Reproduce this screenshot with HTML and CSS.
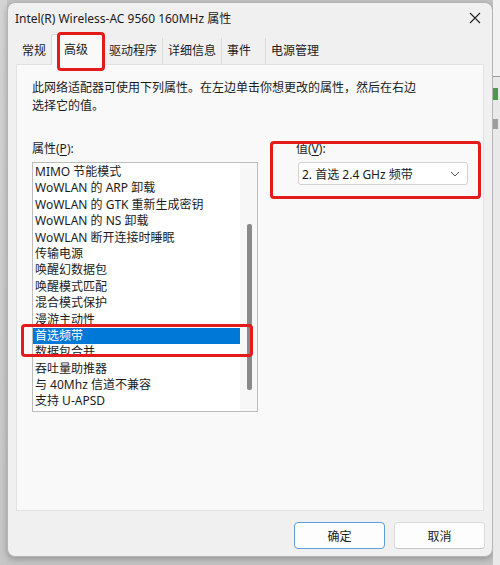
FILE: index.html
```html
<!DOCTYPE html>
<html lang="zh-CN">
<head>
<meta charset="utf-8">
<title>属性</title>
<link rel="stylesheet" href="styles.css">
</head>
<body>
<div class="screen">
  <div class="edge-left"></div>
  <div class="window-col">
    <div class="window">
      <div class="titlebar">
        <span class="title">Intel(R) Wireless-AC 9560 160MHz 属性</span>
        <svg class="close" width="12" height="12" viewBox="0 0 12 12"><path d="M1 1 L11 11 M11 1 L1 11" stroke="#222" stroke-width="1.1" fill="none"/></svg>
      </div>
      <div class="tabs">
        <div class="tab first">常规</div>
        <div class="tab active">高级</div>
        <div class="tab">驱动程序</div>
        <div class="tab">详细信息</div>
        <div class="tab wide-end">事件</div>
        <div class="tab">电源管理</div>
      </div>
      <div class="panel">
        <p class="desc">此网络适配器可使用下列属性。在左边单击你想更改的属性，然后在右边<br>选择它的值。</p>
        <div class="columns">
          <div class="col-left">
            <div class="label">属性(<u>P</u>):</div>
            <div class="listbox">
              <ul class="items">
                <li>MIMO 节能模式</li>
                <li>WoWLAN 的 ARP 卸载</li>
                <li>WoWLAN 的 GTK 重新生成密钥</li>
                <li>WoWLAN 的 NS 卸载</li>
                <li>WoWLAN 断开连接时睡眠</li>
                <li>传输电源</li>
                <li>唤醒幻数据包</li>
                <li>唤醒模式匹配</li>
                <li>混合模式保护</li>
                <li>漫游主动性</li>
                <li class="selected">首选频带</li>
                <li>数据包合并</li>
                <li>吞吐量助推器</li>
                <li>与 40Mhz 信道不兼容</li>
                <li>支持 U-APSD</li>
              </ul>
              <div class="scrolltrack"><div class="thumb"></div></div>
            </div>
          </div>
          <div class="col-right">
            <div class="label">值(<u>V</u>):</div>
            <div class="select">
              <span>2. 首选 2.4 GHz 频带</span>
              <svg width="10" height="6" viewBox="0 0 10 6"><path d="M1 1 L5 5 L9 1" stroke="#555" stroke-width="1" fill="none"/></svg>
            </div>
          </div>
        </div>
      </div>
      <div class="footer">
        <button class="btn default">确定</button>
        <button class="btn">取消</button>
      </div>
    </div>
  </div>
  <div class="edge-right">
    <div class="er-top"></div>
    <div class="er-line"></div>
    <div class="er-green"></div>
    <div class="er-blob"></div>
  </div>
  <div class="mark mark-tab"></div>
  <div class="mark mark-value"></div>
  <div class="mark mark-item"></div>
</div>
</body>
</html>
```

FILE: styles.css
```css
* { box-sizing: border-box; }
html, body { margin: 0; padding: 0; }
body {
  width: 500px;
  height: 565px;
  overflow: hidden;
  background: #c4c4c4;
  font-family: "Noto Sans", "Noto Sans CJK SC", sans-serif;
  font-size: 12px;
  color: #1b1b1b;
}
.screen {
  position: relative;
  display: flex;
  width: 500px;
  height: 565px;
}
.edge-left {
  width: 7px;
  background: linear-gradient(#d4d4d4, #c6c6c6);
}
.window-col {
  width: 486px;
  padding-top: 2px;
}
.window {
  height: 555px;
  border: 1px solid #b4b4b4;
  border-radius: 8px;
  background: #f0f0f0;
  box-shadow: 0 2px 6px rgba(0,0,0,0.25);
  display: flex;
  flex-direction: column;
}
.titlebar {
  height: 29px;
  display: flex;
  align-items: center;
  justify-content: space-between;
  padding: 0 11px 0 7px;
}
.title { font-size: 12px; }
.close { display: block; }
.tabs {
  height: 32px;
  display: flex;
  align-items: flex-end;
  padding-left: 8px;
  position: relative;
  z-index: 1;
}
.tab {
  height: 26px;
  line-height: 26px;
  padding: 0 5px;
  border-left: 1px solid #dcdcdc;
  white-space: nowrap;
}
.tab.first { border-left: none; padding-left: 6px; }
.tab.wide-end { padding-right: 14px; }
.tab.active {
  height: 31px;
  line-height: 30px;
  padding: 0 15px 0 12px;
  background: #f9f9f9;
  border: 1px solid #dadada;
  border-bottom: none;
  border-radius: 3px 3px 0 0;
  margin-bottom: -1px;
}
.tab.active + .tab { border-left: none; }
.panel {
  height: 447px;
  margin: 0 8px 0 8px;
  background: #f9f9f9;
  border: 1px solid #e2e2e2;
  padding: 14px 15px 0 15px;
}
.desc {
  margin: 0;
  line-height: 18px;
}
.columns {
  display: flex;
  margin-top: 25px;
}
.label {
  line-height: 18px;
  height: 18px;
}
.label u { text-underline-offset: 2px; }
.col-left { width: 227px; }
.col-right {
  margin-left: 38px;
}
.listbox {
  margin-top: 4px;
  height: 250px;
  background: #fff;
  border: 1px solid #bdbdbd;
  display: flex;
}
.items {
  list-style: none;
  margin: 0;
  padding: 1px 0 0 0;
  width: 207px;
}
.items li {
  height: 16.4px;
  line-height: 16.4px;
  padding-left: 2px;
  white-space: nowrap;
}
.items li.selected {
  background: #0078d7;
  color: #fff;
}
.scrolltrack {
  flex: 1;
  background: #f7f7f7;
  padding: 61px 0 0 7px;
}
.thumb {
  width: 5px;
  height: 166px;
  background: #8a8a8a;
  border-radius: 2px;
}
.select {
  margin: 4px 0 0 2px;
  width: 170px;
  height: 23px;
  background: #fff;
  border: 1px solid #d3d3d3;
  border-radius: 3px;
  display: flex;
  align-items: center;
  justify-content: space-between;
  padding: 0 7px 0 3px;
  white-space: nowrap;
}
.select svg { display: block; }
.footer {
  display: flex;
  justify-content: flex-end;
  gap: 9px;
  padding: 11px 7px 0 0;
}
.btn {
  width: 91px;
  height: 27px;
  font-family: inherit;
  font-size: 12px;
  color: #1b1b1b;
  background: #fdfdfd;
  border: 1px solid #dcdcdc;
  border-bottom-color: #c8c8c8;
  border-radius: 4px;
  padding: 0;
}
.btn.default {
  border: 1.5px solid #5c9fd8;
}
.edge-right {
  width: 7px;
  background: #e9e9e9;
  display: flex;
  flex-direction: column;
  overflow: hidden;
}
.er-top { height: 76px; background: #f2f2f2; }
.er-line { height: 1px; background: #9a9a9a; }
.er-green { margin-top: 11px; height: 12px; width: 5px; background: #4a9a4a; }
.er-blob { margin-top: 19px; height: 10px; width: 5px; background: #6a6a6a; opacity: 0.6; }
.mark {
  position: absolute;
  border: 3px solid #e31b1b;
  border-radius: 4px;
  z-index: 5;
}
.mark-tab { left: 57px; top: 32px; width: 48px; height: 39px; }
.mark-value { left: 270px; top: 141px; width: 211px; height: 58px; }
.mark-item { left: 21px; top: 324px; width: 232px; height: 33px; }
```
